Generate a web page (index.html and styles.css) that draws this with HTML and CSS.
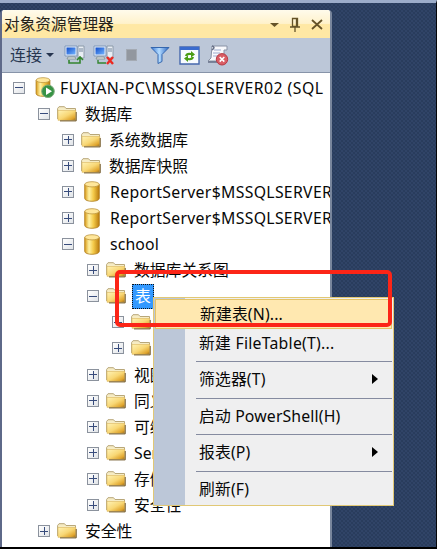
FILE: index.html
```
<!DOCTYPE html>
<html lang="zh-CN">
<head>
<meta charset="utf-8">
<title>对象资源管理器</title>
<link rel="stylesheet" href="styles.css">
</head>
<body>
<svg width="0" height="0" class="defs" aria-hidden="true">
  <defs>
    <linearGradient id="gold" x1="0" y1="0" x2="1" y2="1"><stop offset="0" stop-color="#fff3b5"/><stop offset=".5" stop-color="#f8d775"/><stop offset=".82" stop-color="#e0a52d"/><stop offset="1" stop-color="#94641a"/></linearGradient>
    <linearGradient id="drum" x1="0" x2="1"><stop offset="0" stop-color="#d99b18"/><stop offset=".3" stop-color="#fff2a4"/><stop offset=".6" stop-color="#f4ca49"/><stop offset="1" stop-color="#b97b0d"/></linearGradient>
    <linearGradient id="screen" x1="0" y1="0" x2="1" y2="1"><stop offset="0" stop-color="#124cc9"/><stop offset="1" stop-color="#71b4ff"/></linearGradient>
    <linearGradient id="cone" x1="0" x2="1"><stop offset="0" stop-color="#3675d4"/><stop offset=".45" stop-color="#b4dcff"/><stop offset="1" stop-color="#2a63bf"/></linearGradient>
    <symbol id="folder" viewBox="0 0 21 16"><path d="M.6 13V2.5L2 .7h5.5L9 2.5h9.5v3" fill="#f6ecc4" stroke="#b8a779"/><path d="M1 4.5h17.8v9.8H1z" fill="url(#gold)" stroke="#dcb75e" stroke-width=".6"/><path d="M3 14.9h16.2V6" fill="none" stroke="#6d5426" stroke-width="1"/></symbol>
    <symbol id="db" viewBox="0 0 16 21"><path d="M.7 3.3v14c0 4 14.6 4 14.6 0v-14" fill="url(#drum)" stroke="#ad7b1c" stroke-width=".8"/><ellipse cx="8" cy="3.3" rx="7.2" ry="2.6" fill="#ffe79b" stroke="#bc963e" stroke-width=".8"/></symbol>
    <symbol id="pc" viewBox="0 0 22 20"><path d="M14 1h6v12h-6z" fill="#e9eef4" stroke="#8c9aa9"/><path d="M15 4h4M15 6h4" stroke="#74879d"/><path d="M1 1h12v10H1z" fill="#e7effa" stroke="#8199ba"/><path d="M2.5 2.5h9v7h-9z" fill="url(#screen)"/><path d="M4 12h7l1 2H3z" fill="#f3f3f3" stroke="#899"/></symbol>
  </defs>
</svg>
<div class="desktop">
  <section class="panel">
    <header class="title"><span>对象资源管理器</span>
      <svg class="controls" width="56" height="18" viewBox="0 0 56 18" fill="none" stroke="#655328"><path d="M1 7h9l-4.5 4z" fill="#655328" stroke="none"/><path d="M23.5 2.5h5v8h-5zM27.5 2.5v8M21 11h10M26 11v5" stroke-width="1.3"/><path d="M43 4l10 9M53 4l-10 9" stroke-width="1.8"/></svg>
    </header>
    <div class="toolbar"><span>连接</span><i class="caret"></i>
      <svg class="tool connect" viewBox="0 0 22 20"><use href="#pc" width="22" height="20"/><path d="M5 15v3h11v-5M13 15l3-3 3 3" fill="none" stroke="#33852f" stroke-width="1.6"/></svg>
      <svg class="tool disconnect" viewBox="0 0 22 20"><use href="#pc" width="22" height="20"/><path d="M5 15v3h8" fill="none" stroke="#33852f" stroke-width="1.4"/><path d="M14 12l6 7M20 12l-6 7" stroke="#ec2921" stroke-width="2.4"/></svg>
      <i class="stop"></i>
      <svg class="tool filter" viewBox="0 0 20 18"><path d="M1 1.5h18l-7 7v7l-4 2v-9z" fill="url(#cone)" stroke="#3567ae"/></svg>
      <svg class="tool refresh" viewBox="0 0 21 19"><path d="M1 1h19v17H1z" fill="#f8fbff" stroke="#4668ad" stroke-width="1.4"/><path d="M1 1h19v3H1z" fill="#3a6bce"/><path d="M6 10q1-4 6-3V5l4 3.5-4 3V9q-3-.5-4 1zM15 11q-1 4-6 3v2l-4-3.5 4-3V12q3 .5 4-1z" fill="#4a9c15"/></svg>
      <svg class="tool script" viewBox="0 0 22 21"><path d="M5 1h15v4h-3v11H1l3-3z" fill="#f8f9fc" stroke="#8992a5"/><path d="M5 1q4 1 0 4M1 17h12" fill="none" stroke="#666f86" stroke-width="1.5"/><path d="M7 5h7M6 8h7M6 11h5" stroke="#9daace"/><circle cx="15" cy="14.3" r="5.7" fill="#d95d65" stroke="#b83a44"/><path d="M12.7 12l4.6 4.6m0-4.6l-4.6 4.6" stroke="#fff" stroke-width="1.6"/></svg>
    </div>
    <div class="tree">
      <div class="row l0"><i class="box minus"></i><svg class="icon server" viewBox="0 0 21 22"><use href="#db" width="16" height="20" x="1"/><circle cx="14" cy="14.3" r="6.3" fill="#379345" stroke="#82ad80"/><path d="M12 10.5l6 3.8-6 3.8z" fill="#fff"/></svg><span class="server-name">FUXIAN-PC\MSSQLSERVER02 (SQL</span></div>
      <div class="row l1"><i class="box minus"></i><svg class="icon"><use href="#folder"/></svg><span>数据库</span></div>
      <div class="row l2"><i class="box"></i><svg class="icon"><use href="#folder"/></svg><span>系统数据库</span></div>
      <div class="row l2"><i class="box"></i><svg class="icon"><use href="#folder"/></svg><span>数据库快照</span></div>
      <div class="row l2"><i class="box"></i><svg class="icon db"><use href="#db"/></svg><span class="report">ReportServer$MSSQLSERVER</span></div>
      <div class="row l2"><i class="box"></i><svg class="icon db"><use href="#db"/></svg><span class="report">ReportServer$MSSQLSERVER</span></div>
      <div class="row l2"><i class="box minus"></i><svg class="icon db"><use href="#db"/></svg><span class="school">school</span></div>
      <div class="row l3"><i class="box"></i><svg class="icon"><use href="#folder"/></svg><span>数据库关系图</span></div>
      <div class="row l3"><i class="box minus"></i><svg class="icon"><use href="#folder"/></svg><span class="selected">表</span></div>
      <div class="row l4"><i class="box"></i><svg class="icon"><use href="#folder"/></svg></div>
      <div class="row l4"><i class="box"></i><svg class="icon"><use href="#folder"/></svg></div>
      <div class="row l3"><i class="box"></i><svg class="icon"><use href="#folder"/></svg><span>视图</span></div>
      <div class="row l3"><i class="box"></i><svg class="icon"><use href="#folder"/></svg><span>同义词</span></div>
      <div class="row l3"><i class="box"></i><svg class="icon"><use href="#folder"/></svg><span>可编程性</span></div>
      <div class="row l3"><i class="box"></i><svg class="icon"><use href="#folder"/></svg><span>Service</span></div>
      <div class="row l3"><i class="box"></i><svg class="icon"><use href="#folder"/></svg><span>存储</span></div>
      <div class="row l3"><i class="box"></i><svg class="icon"><use href="#folder"/></svg><span>安全性</span></div>
      <div class="row l1"><i class="box"></i><svg class="icon"><use href="#folder"/></svg><span>安全性</span></div>
    </div>
  </section>
  <div class="menu">
    <div class="item active"><span>新建表(N)...</span></div>
    <div class="item second"><span>新建 FileTable(T)...</span></div>
    <div class="item"><span>筛选器(T)</span><i class="arrow"></i></div>
    <div class="item"><span>启动 PowerShell(H)</span></div>
    <div class="item"><span>报表(P)</span><i class="arrow"></i></div>
    <div class="item"><span>刷新(F)</span></div>
  </div>
  <div class="marker"></div>
</div>
</body>
</html>
```
FILE: styles.css
```
* { box-sizing: border-box; }
body { margin: 0; overflow: hidden; font: 16px/26px "Noto Sans", "Noto Sans CJK SC", sans-serif; color: #080808; }
.defs { position: absolute; }
.desktop { position: relative; width: 437px; height: 549px; padding-top: 7px; overflow: hidden; border-top: 3px solid #9cadca; border-right: 1px solid #050609; border-bottom: 2px solid #000; background-color: #304467; background-image: radial-gradient(circle, #293c5d 0 .7px, transparent 1px), radial-gradient(circle, #293c5d 0 .7px, transparent 1px); background-size: 4px 4px; background-position: 0 0, 2px 2px; }
.panel { width: 332px; height: 537px; border-left: 2px solid #5e6989; border-right: 2px solid #79869c; border-radius: 4px 4px 0 0; background: #fff; overflow: hidden; }
.title { height: 28px; display: flex; align-items: center; justify-content: space-between; padding: 0 5px 0 2px; background: linear-gradient(#fffbec, #fff2cb 48%, #ffe8a4 52%, #ffe8a4); white-space: nowrap; color: #26231b; }
.title span { font-size: 15.7px; }
.controls { flex: none; margin-top: 1px; }
.toolbar { height: 35px; display: flex; align-items: center; padding-left: 8px; background: #bcc7d8; border-bottom: 1px solid #8794a9; color: #26354f; }
.toolbar span { font-size: 16px; }
.caret { margin-left: 4px; border: 4px solid transparent; border-top-color: #26354f; border-bottom: 0; }
.tool { flex: none; }
.connect { width: 22px; height: 20px; margin-left: 10px; }
.disconnect { width: 22px; height: 20px; margin-left: 7px; }
.stop { width: 11px; height: 12px; margin-left: 11px; background: #92979f; border: 1px solid #a4aab3; }
.filter { width: 20px; height: 18px; margin-left: 13px; }
.refresh { width: 21px; height: 19px; margin-left: 9px; }
.script { width: 22px; height: 21px; margin-left: 7px; }
.tree { padding-top: 1.5px; }
.row { height: 26.1px; display: flex; align-items: center; white-space: nowrap; }
.row > * { flex: none; }
.row > span { margin-left: 7px; font-size: 15.8px; }
.l0 { padding-left: 11px; }
.l1 { padding-left: 36px; }
.l2 { padding-left: 60px; }
.l3 { padding-left: 85px; }
.l4 { padding-left: 110px; }
.box { width: 12px; height: 12px; border: 1px solid #8b929d; background: linear-gradient(#384c7c, #384c7c) center / 8px 1px no-repeat, linear-gradient(#384c7c, #384c7c) center / 1px 8px no-repeat, linear-gradient(135deg, #fff, #e1e4e8); }
.minus { background: linear-gradient(#384c7c, #384c7c) center / 8px 1px no-repeat, linear-gradient(135deg, #fff, #e1e4e8); }
.icon { width: 21px; height: 16px; margin-left: 7px; }
.icon.db { width: 16px; height: 21px; margin: 0 3px 0 10px; }
.icon.server { width: 21px; height: 22px; margin-left: 9px; }
.row > .server-name { margin-left: 5px; letter-spacing: .45px; }
.row > .report { letter-spacing: .32px; }
.row > .school { letter-spacing: .15px; }
.row > .selected { height: 25px; padding: 0 2px; margin-left: 5px; line-height: 23px; background: #3399ff; color: #fff; border: 1px dotted #111; }
.menu { position: absolute; left: 153px; top: 294px; width: 241px; height: 209px; padding: 1px; border: 1px solid #e1c875; background: linear-gradient(90deg, #bcc7d8 31px, #efeff0 31px); }
.item { height: 36.6px; display: flex; align-items: center; justify-content: space-between; padding: 0 14px 1px 3px; margin-left: 41px; border-top: 1px solid #858ba0; white-space: nowrap; }
.item span { font-size: 15.8px; letter-spacing: .15px; }
.item.active { height: 30px; margin-left: 0; padding-left: 44px; border: 1px solid #e5c365; background: #ffe8b0; }
.item.second { height: 32px; padding-bottom: 5px; border-top: 0; }
.item.second span { letter-spacing: .25px; }
.arrow { border: 5px solid transparent; border-left: 6px solid #000; border-right: 0; }
.marker { position: absolute; left: 115px; top: 267px; width: 277px; height: 57px; border: 4px solid #fc2517; border-radius: 5px; }
```
